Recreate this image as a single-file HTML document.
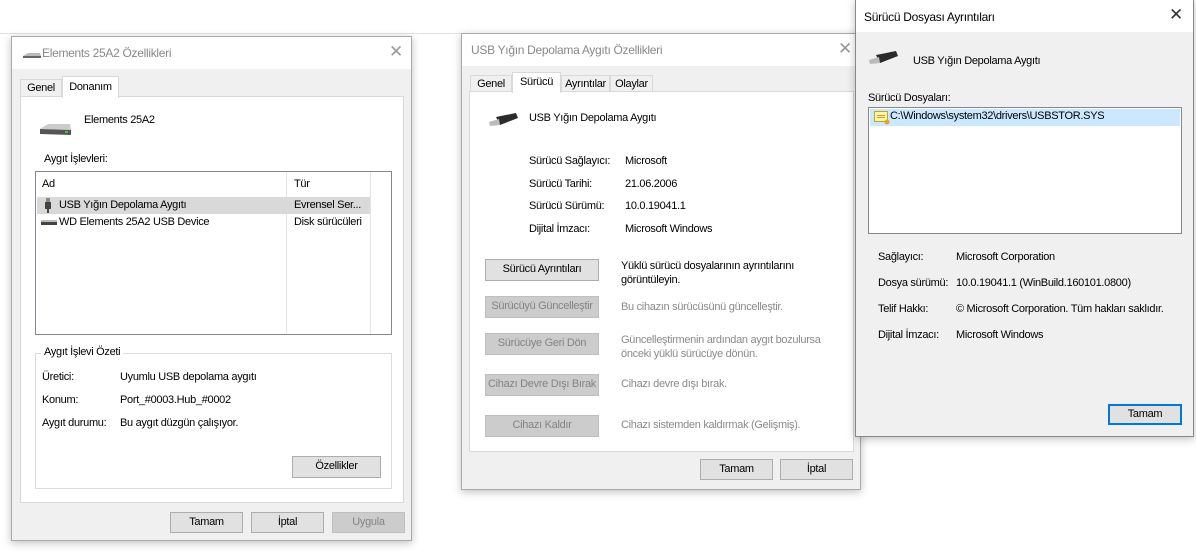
<!DOCTYPE html>
<html><head><meta charset="utf-8"><style>
*{box-sizing:border-box;margin:0;padding:0}
body{width:1196px;height:553px;background:#fff;position:relative;overflow:hidden;font-family:"Liberation Sans",sans-serif;font-size:11px;letter-spacing:-0.3px;color:#000}
.a{position:absolute;white-space:nowrap}
.win{position:absolute;background:#f0f0f0;border:1px solid #aaa;box-shadow:0 2px 8px rgba(0,0,0,.25)}
.tb{position:absolute;left:0;right:0;top:0;background:#fff}
.tt{position:absolute;color:#888;font-size:12px;white-space:nowrap}
.x{position:absolute;font-size:17px;color:#999;font-weight:normal;letter-spacing:0}
.panel{position:absolute;background:#fff;border:1px solid #d9d9d9}
.tab{position:absolute;background:#f0f0f0;border:1px solid #d9d9d9;border-bottom:none;text-align:center;line-height:17px;white-space:nowrap}
.tab.s{background:#fff;line-height:17px;z-index:2}
.btn{position:absolute;background:#e1e1e1;border:1px solid #adadad;text-align:center;line-height:19px;white-space:nowrap}
.btn.d{background:#ccc;border-color:#bfbfbf;color:#838383}
.g{color:#8a8a8a}
</style></head><body>
<div class="a" style="left:0;top:33px;width:860px;height:1px;background:#e3e3e3"></div>

<!-- Window 1 -->
<div class="win" style="left:11px;top:36px;width:401px;height:505px">
 <div class="tb" style="height:32px"></div>
 <svg class="a" style="left:10px;top:14px" width="20" height="8"><path d="M1 5 L6 2 L18 2 L19 5 Z" fill="#bbb"/><rect x="1" y="5" width="18" height="2" fill="#666"/></svg>
 <div class="tt" style="left:30px;top:9px">Elements 25A2 Özellikleri</div>
 <div class="x" style="left:377px;top:5px">✕</div>
 <div class="tab" style="left:8px;top:42px;width:42px;height:17px">Genel</div>
 <div class="tab s" style="left:50px;top:39px;width:57px;height:22px;line-height:20px">Donanım</div>
 <div class="panel" style="left:8px;top:59px;width:384px;height:407px">
  <svg class="a" style="left:17px;top:25px" width="34" height="16"><path d="M2 7 L10 2 L32 2 L33 8 Z" fill="#ccc"/><path d="M2 7 L33 8 L33 13 L2 12Z" fill="#555"/><rect x="27" y="9" width="3" height="2" fill="#3c3"/></svg>
  <div class="a" style="left:63px;top:17px">Elements 25A2</div>
  <div class="a" style="left:23px;top:56px">Aygıt İşlevleri:</div>
  <div class="a" style="left:14px;top:74px;width:357px;height:164px;border:1px solid #828790;background:#fff">
   <div class="a" style="left:6px;top:6px">Ad</div>
   <div class="a" style="left:250px;top:0;width:1px;height:162px;background:#e5e5e5"></div>
   <div class="a" style="left:334px;top:0;width:1px;height:162px;background:#e5e5e5"></div>
   <div class="a" style="left:258px;top:6px">Tür</div>
   <div class="a" style="left:1px;top:25px;width:333px;height:17px;background:#d9d9d9"></div>
   <svg class="a" style="left:8px;top:26px" width="10" height="15"><rect x="2" y="0" width="4" height="4" fill="#888"/><rect x="1" y="4" width="6" height="7" fill="#444"/><rect x="3" y="11" width="2" height="4" fill="#444"/></svg>
   <div class="a" style="left:23px;top:27px">USB Yığın Depolama Aygıtı</div>
   <div class="a" style="left:258px;top:27px">Evrensel Ser...</div>
   <svg class="a" style="left:5px;top:47px" width="16" height="7"><rect x="0" y="1" width="16" height="2" fill="#bbb"/><rect x="0" y="3" width="16" height="3" fill="#444"/></svg>
   <div class="a" style="left:23px;top:44px">WD Elements 25A2 USB Device</div>
   <div class="a" style="left:258px;top:44px">Disk sürücüleri</div>
  </div>
  <div class="a" style="left:14px;top:256px;width:357px;height:136px;border:1px solid #dcdcdc"></div>
  <div class="a" style="left:20px;top:249px;background:#fff;padding:0 3px">Aygıt İşlevi Özeti</div>
  <div class="a" style="left:21px;top:274px">Üretici:</div><div class="a" style="left:99px;top:274px">Uyumlu USB depolama aygıtı</div>
  <div class="a" style="left:21px;top:297px">Konum:</div><div class="a" style="left:99px;top:297px">Port_#0003.Hub_#0002</div>
  <div class="a" style="left:21px;top:320px">Aygıt durumu:</div><div class="a" style="left:99px;top:320px">Bu aygıt düzgün çalışıyor.</div>
  <div class="btn" style="left:271px;top:359px;width:89px;height:22px">Özellikler</div>
 </div>
 <div class="btn" style="left:158px;top:475px;width:73px;height:21px">Tamam</div>
 <div class="btn" style="left:239px;top:475px;width:73px;height:21px">İptal</div>
 <div class="btn d" style="left:320px;top:475px;width:73px;height:21px">Uygula</div>
</div>

<!-- Window 2 -->
<div class="win" style="left:461px;top:33px;width:400px;height:457px">
 <div class="tb" style="height:32px"></div>
 <div class="tt" style="left:9px;top:9px">USB Yığın Depolama Aygıtı Özellikleri</div>
 <div class="x" style="left:376px;top:5px">✕</div>
 <div class="tab" style="left:8px;top:41px;width:42px;height:17px">Genel</div>
 <div class="tab s" style="left:50px;top:38px;width:49px;height:21px;line-height:18px">Sürücü</div>
 <div class="tab" style="left:99px;top:41px;width:49px;height:17px">Ayrıntılar</div>
 <div class="tab" style="left:148px;top:41px;width:43px;height:17px">Olaylar</div>
 <div class="panel" style="left:7px;top:57px;width:385px;height:361px">
  <svg class="a" style="left:16px;top:20px" width="34" height="16"><path d="M10 5 L30 1 L32 6 L14 13 Z" fill="#2b2b2b"/><path d="M3 10 L13 7 L14 13 L4 14 Z" fill="#bbb"/></svg>
  <div class="a" style="left:59px;top:20px">USB Yığın Depolama Aygıtı</div>
  <div class="a" style="left:59px;top:63px">Sürücü Sağlayıcı:</div><div class="a" style="left:155px;top:63px">Microsoft</div>
  <div class="a" style="left:59px;top:86px">Sürücü Tarihi:</div><div class="a" style="left:155px;top:86px">21.06.2006</div>
  <div class="a" style="left:59px;top:108px">Sürücü Sürümü:</div><div class="a" style="left:155px;top:108px">10.0.19041.1</div>
  <div class="a" style="left:59px;top:131px">Dijital İmzacı:</div><div class="a" style="left:155px;top:131px">Microsoft Windows</div>
  <div class="btn" style="left:15px;top:167px;width:114px;height:22px">Sürücü Ayrıntıları</div>
  <div class="a" style="left:151px;top:167px;line-height:14px">Yüklü sürücü dosyalarının ayrıntılarını<br>görüntüleyin.</div>
  <div class="btn d" style="left:15px;top:204px;width:114px;height:22px">Sürücüyü Güncelleştir</div>
  <div class="a g" style="left:151px;top:209px">Bu cihazın sürücüsünü güncelleştir.</div>
  <div class="btn d" style="left:15px;top:241px;width:114px;height:22px">Sürücüye Geri Dön</div>
  <div class="a g" style="left:151px;top:241px;line-height:14px">Güncelleştirmenin ardından aygıt bozulursa<br>önceki yüklü sürücüye dönün.</div>
  <div class="btn d" style="left:15px;top:282px;width:114px;height:22px">Cihazı Devre Dışı Bırak</div>
  <div class="a g" style="left:151px;top:286px">Cihazı devre dışı bırak.</div>
  <div class="btn d" style="left:15px;top:323px;width:114px;height:22px">Cihazı Kaldır</div>
  <div class="a g" style="left:151px;top:327px">Cihazı sistemden kaldırmak (Gelişmiş).</div>
 </div>
 <div class="btn" style="left:238px;top:425px;width:73px;height:21px">Tamam</div>
 <div class="btn" style="left:318px;top:425px;width:73px;height:21px">İptal</div>
</div>

<!-- Window 3 -->
<div class="win" style="left:855px;top:-1px;width:339px;height:438px;border-color:#888">
 <div class="tb" style="height:32px"></div>
 <div class="a" style="left:8px;top:10px;font-size:12px">Sürücü Dosyası Ayrıntıları</div>
 <div class="x" style="left:313px;top:5px;color:#333">✕</div>
 <svg class="a" style="left:12px;top:50px" width="34" height="16"><path d="M8 5 L28 1 L30 6 L12 13 Z" fill="#2b2b2b"/><path d="M1 10 L11 7 L12 13 L2 14 Z" fill="#bbb"/></svg>
 <div class="a" style="left:57px;top:55px">USB Yığın Depolama Aygıtı</div>
 <div class="a" style="left:12px;top:92px">Sürücü Dosyaları:</div>
 <div class="a" style="left:12px;top:107px;width:314px;height:127px;border:1px solid #828790;background:#fff">
  <div class="a" style="left:1px;top:1px;width:310px;height:17px;background:#cce8ff"></div>
  <svg class="a" style="left:5px;top:3px" width="16" height="14"><rect x="0.5" y="0.5" width="13" height="10" fill="#fff3b0" stroke="#c9a020"/><rect x="3" y="4" width="8" height="1" fill="#c9a020"/><rect x="3" y="6" width="8" height="1" fill="#c9a020"/><circle cx="13" cy="11" r="2.5" fill="#e9a51c"/></svg>
  <div class="a" style="left:21px;top:2px">C:\Windows\system32\drivers\USBSTOR.SYS</div>
 </div>
 <div class="a" style="left:22px;top:251px">Sağlayıcı:</div><div class="a" style="left:100px;top:251px">Microsoft Corporation</div>
 <div class="a" style="left:22px;top:277px">Dosya sürümü:</div><div class="a" style="left:100px;top:277px">10.0.19041.1 (WinBuild.160101.0800)</div>
 <div class="a" style="left:22px;top:303px">Telif Hakkı:</div><div class="a" style="left:100px;top:303px">© Microsoft Corporation. Tüm hakları saklıdır.</div>
 <div class="a" style="left:22px;top:329px">Dijital İmzacı:</div><div class="a" style="left:100px;top:329px">Microsoft Windows</div>
 <div class="btn" style="left:252px;top:404px;width:74px;height:21px;border:2px solid #0078d7;line-height:17px">Tamam</div>
</div>
</body></html>
